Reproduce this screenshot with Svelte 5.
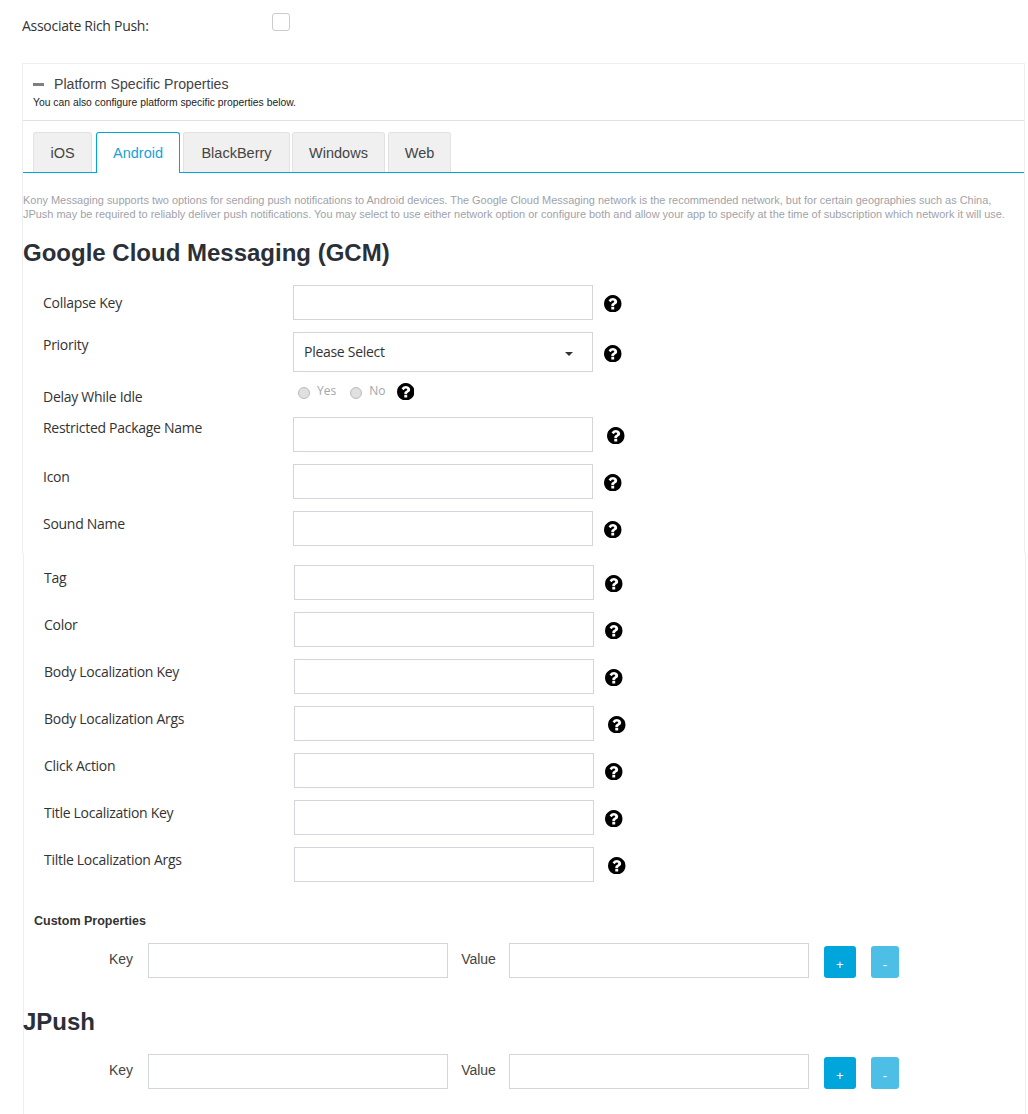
<script lang="ts">
  const tabs = ["iOS", "Android", "BlackBerry", "Windows", "Web"];
  const gcmTop = [
    { label: "Restricted Package Name", wide: true, high: true },
    { label: "Icon" },
    { label: "Sound Name" }
  ];
  const gcmBottom = [
    { label: "Tag" },
    { label: "Color" },
    { label: "Body Localization Key" },
    { label: "Body Localization Args", wide: true },
    { label: "Click Action" },
    { label: "Title Localization Key" },
    { label: "Tiltle Localization Args", wide: true }
  ];
  const helpPath = "M896 1376v-192q0-14-9-23t-23-9h-192q-14 0-23 9t-9 23v192q0 14 9 23t23 9h192q14 0 23-9t9-23zm256-672q0-88-55.5-163t-138.5-116-170-41q-243 0-371 213-15 24 8 42l132 100q7 6 19 6 16 0 25-12 53-68 86-92 34-24 86-24 48 0 85.5 26t37.5 59q0 38-20 61t-68 45q-63 28-115.5 86.5t-52.5 125.5v36q0 14 9 23t23 9h192q14 0 23-9t9-23q0-19 21.5-49.5t54.5-49.5q32-18 49-28.5t46-35 44.5-48 28-60.5 12.5-81zm384 192q0 209-103 385.5t-279.5 279.5-385.5 103-385.5-103-279.5-279.5-103-385.5 103-385.5 279.5-279.5 385.5-103 385.5 103 279.5 279.5 103 385.5z";
</script>

{#snippet help(cls = "")}
  <svg class="help {cls}" viewBox="0 128 1536 1536" aria-hidden="true"><path d={helpPath} /></svg>
{/snippet}

{#snippet keyValue()}
  <div class="kv">
    <span class="kv-key">Key</span>
    <input class="field" type="text" />
    <span class="kv-value">Value</span>
    <input class="field" type="text" />
    <button class="add">+</button>
    <button class="remove">-</button>
  </div>
{/snippet}

<div class="page">
  <div class="rich">
    <span class="rich-label">Associate Rich Push:</span>
    <span class="checkbox"></span>
  </div>

  <section class="panel">
    <header class="panel-head">
      <div class="panel-title"><span class="minus"></span>Platform Specific Properties</div>
      <p class="panel-sub">You can also configure platform specific properties below.</p>
    </header>

    <div class="tabs">
      {#each tabs as t}
        <div class="tab" class:active={t === "Android"}>{t}</div>
      {/each}
    </div>

    <p class="intro">Kony Messaging supports two options for sending push notifications to Android devices. The Google Cloud Messaging network is the recommended network, but for certain geographies such as China, JPush may be required to reliably deliver push notifications. You may select to use either network option or configure both and allow your app to specify at the time of subscription which network it will use.</p>

    <h2 class="gcm-title">Google Cloud Messaging (GCM)</h2>

    <div class="form">
      <div class="row">
        <label class="centered">Collapse Key</label>
        <input class="field" type="text" />
        {@render help()}
      </div>
      <div class="row select-row">
        <label>Priority</label>
        <div class="select">Please Select<span class="caret"></span></div>
        {@render help()}
      </div>
      <div class="row radio-row">
        <label>Delay While Idle</label>
        <span class="radio"></span><span class="radio-text">Yes</span>
        <span class="radio"></span><span class="radio-text">No</span>
        {@render help("radio-help")}
      </div>
      {#each gcmTop as f}
        <div class="row">
          <label class:high={f.high}>{f.label}</label>
          <input class="field" type="text" />
          {@render help(f.wide ? "wide" : "")}
        </div>
      {/each}
    </div>
  </section>

  <section class="panel-lower">
    <div class="form second">
      {#each gcmBottom as f}
        <div class="row">
          <label>{f.label}</label>
          <input class="field" type="text" />
          {@render help(f.wide ? "wide" : "")}
        </div>
      {/each}
    </div>

    <div class="custom-title">Custom Properties</div>
    {@render keyValue()}

    <h2 class="jpush-title">JPush</h2>
    {@render keyValue()}
  </section>
</div>

<style>
  :global(body) {
    margin: 0;
    background: #fff;
  }
  .page {
    height: 1114px;
    overflow: hidden;
    font-family: "Open Sans", "Noto Sans", sans-serif;
    color: #333;
    box-sizing: border-box;
    padding-top: 13px;
  }
  .rich {
    display: flex;
    align-items: flex-start;
    padding-left: 22px;
    height: 50px;
  }
  .rich-label {
    width: 250px;
    font-size: 14px;
    letter-spacing: -0.28px;
    line-height: 18px;
    margin-top: 4px;
  }
  .checkbox {
    width: 16px;
    height: 16px;
    border: 1px solid #ccc;
    border-radius: 3px;
    background: #fff;
  }
  .panel {
    margin-left: 22px;
    width: 1003px;
    box-sizing: border-box;
    border: 1px solid #eee;
    border-bottom: 0;
    padding-bottom: 7px;
  }
  .panel-lower {
    margin-left: 23px;
    width: 1003px;
    box-sizing: border-box;
    border: 1px solid #eee;
    border-width: 0 1px;
    height: 561px;
    padding-top: 12px;
  }
  .panel-head {
    box-sizing: border-box;
    height: 57px;
    border-bottom: 1px solid #e0e0e0;
    padding: 12px 0 0 10px;
  }
  .panel-title {
    display: flex;
    align-items: center;
    font-family: "Liberation Sans", Arial, sans-serif;
    font-size: 14.15px;
    line-height: 17px;
    color: #444;
  }
  .minus {
    width: 11px;
    height: 3px;
    background: #808080;
    margin-right: 10px;
  }
  .panel-sub {
    margin: 4px 0 0;
    font-family: "Liberation Sans", Arial, sans-serif;
    font-size: 10.35px;
    line-height: 12px;
    color: #222;
  }
  .tabs {
    display: flex;
    margin-top: 11px;
    padding-left: 10px;
    height: 40px;
    border-bottom: 1px solid #00a5dc;
  }
  .tab {
    box-sizing: border-box;
    height: 40px;
    text-align: center;
    line-height: 40px;
    font-family: "Liberation Sans", Arial, sans-serif;
    font-size: 14.5px;
    color: #444;
    background: #f0f0f0;
    border: 1px solid #e2e2e2;
    border-bottom: 0;
    border-radius: 3px 3px 0 0;
  }
  .tab:nth-child(1) { width: 59px; margin-right: 4px; }
  .tab:nth-child(2) { width: 84px; margin-right: 3px; }
  .tab:nth-child(3) { width: 107px; margin-right: 2px; }
  .tab:nth-child(4) { width: 93px; margin-right: 3px; }
  .tab:nth-child(5) { width: 63px; }
  .tab.active {
    height: 41px;
    color: #1a9fd8;
    background: #fff;
    border-color: #00a5dc;
    position: relative;
    z-index: 1;
  }
  .intro {
    margin: 20px 0 0;
    font-family: "Liberation Sans", Arial, sans-serif;
    font-size: 10.95px;
    line-height: 14px;
    color: #9fa2a9;
    width: 995px;
  }
  .gcm-title, .jpush-title {
    margin: 0;
    font-family: "Liberation Sans", Arial, sans-serif;
    font-size: 24px;
    font-weight: 700;
    line-height: 28px;
    color: #2b3038;
  }
  .gcm-title { margin-top: 18px; }
  .form {
    margin-top: 18px;
    padding-left: 20px;
    display: flex;
    flex-direction: column;
    gap: 12px;
  }
  .form.second { margin-top: 0; }
  .row {
    display: flex;
    align-items: flex-start;
    height: 35px;
  }
  label {
    width: 250px;
    flex: none;
    font-size: 14px;
    letter-spacing: -0.28px;
    line-height: 18px;
    margin-top: 4px;
    color: #333;
  }
  label.high { margin-top: 2px; }
  label.centered { margin-top: 9px; }
  .field {
    box-sizing: border-box;
    width: 300px;
    height: 35px;
    padding: 0;
    border: 1px solid #d2d6dc;
    background: #fff;
    flex: none;
  }
  .help {
    width: 17.5px;
    height: 17.5px;
    fill: #000;
    margin: 9.5px 0 0 11px;
    flex: none;
  }
  .help.wide { margin-left: 14px; }
  .select-row { height: 40px; }
  .select-row .help { margin-top: 12.5px; }
  .select {
    box-sizing: border-box;
    width: 300px;
    height: 40px;
    border: 1px solid #d2d6dc;
    padding: 0 0 2px 10px;
    display: flex;
    align-items: center;
    font-size: 14px;
    letter-spacing: -0.28px;
    color: #333;
    position: relative;
    flex: none;
  }
  .caret {
    position: absolute;
    right: 19px;
    top: 19px;
    border: 4px solid transparent;
    border-top: 4px solid #333;
    border-bottom: 0;
  }
  .radio-row {
    height: 25px;
    margin-top: -4px;
  }
  .radio-row label { margin-top: 8px; }
  .radio {
    box-sizing: border-box;
    width: 12px;
    height: 12px;
    border: 1px solid #bbb;
    border-radius: 50%;
    background: #e0e0e0;
    margin: 7px 0 0 5px;
    flex: none;
  }
  .radio + .radio-text + .radio { margin-left: 14px; }
  .radio-text {
    font-size: 12px;
    line-height: 16px;
    color: #a3a6ad;
    margin: 3px 0 0 7px;
  }
  .radio-row .help.radio-help {
    margin: 2.5px 0 0 11.5px;
  }
  .custom-title {
    margin: 31px 0 0 10px;
    font-family: "Liberation Sans", Arial, sans-serif;
    font-size: 12.5px;
    font-weight: 700;
    line-height: 16px;
    color: #333;
  }
  .kv {
    display: flex;
    align-items: flex-start;
    margin-top: 14px;
    height: 35px;
  }
  .kv .field { width: 300px; }
  .kv-key, .kv-value {
    font-family: "Liberation Sans", Arial, sans-serif;
    font-size: 14px;
    line-height: 18px;
    margin-top: 7px;
    color: #444;
  }
  .kv-key { margin-left: 85px; margin-right: 15px; }
  .kv-value { margin-left: 13px; margin-right: 13px; }
  .add, .remove {
    width: 32px;
    height: 32px;
    margin-top: 3px;
    padding: 5px 0 0;
    border: 0;
    border-radius: 3px;
    color: #fff;
    font-family: "Liberation Sans", Arial, sans-serif;
    font-size: 13px;
    background: #00a5dc;
  }
  .add { margin-left: 15px; }
  .remove {
    width: 28px;
    margin-left: 15px;
    background: #4dbfe6;
  }
  .jpush-title { margin: 30px 0 0 -1px; }
  .jpush-title + .kv { margin-top: 18px; }
</style>
